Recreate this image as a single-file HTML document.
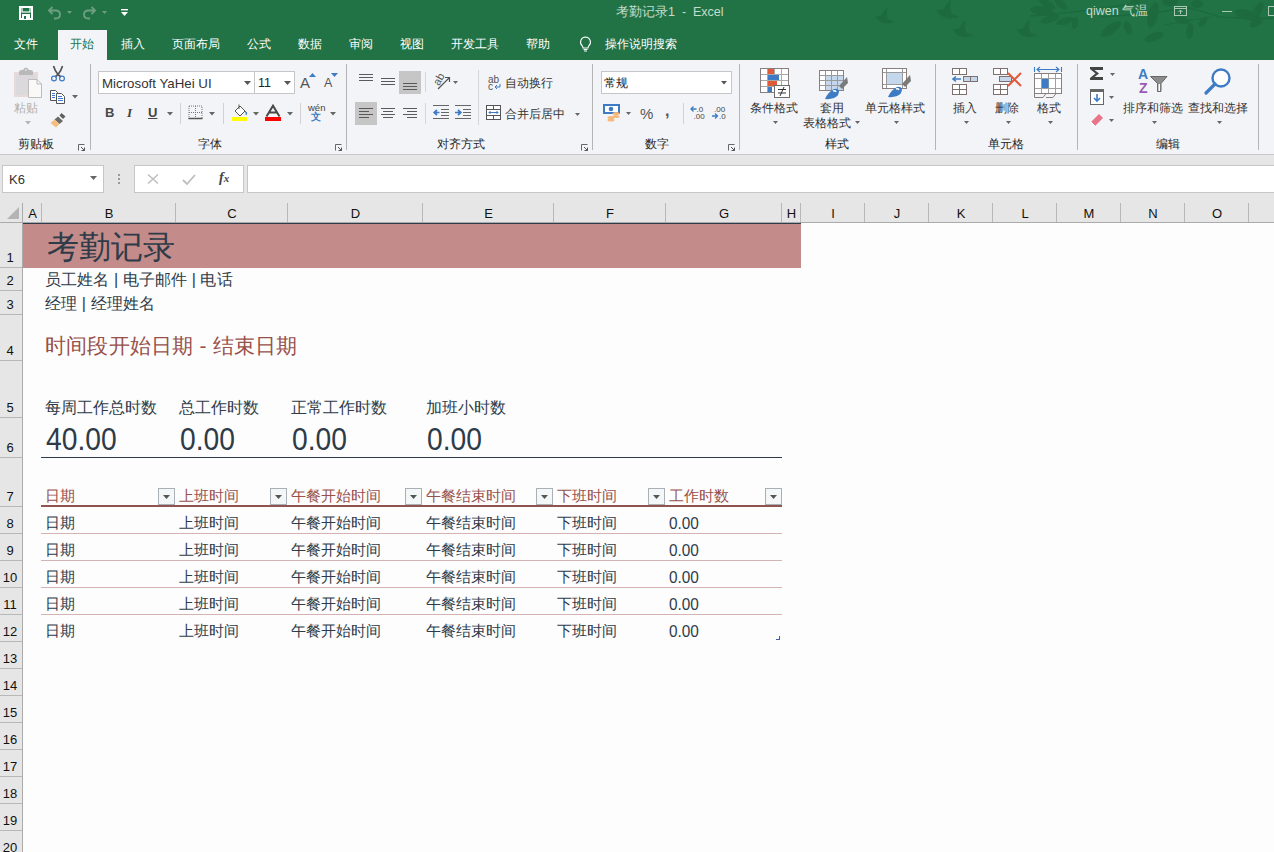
<!DOCTYPE html><html><head><meta charset="utf-8"><style>
*{box-sizing:border-box;margin:0;padding:0}
html,body{width:1274px;height:852px;overflow:hidden;background:#fdfdfd;font-family:"Liberation Sans",sans-serif}
.a{position:absolute}
.t{position:absolute;white-space:nowrap;line-height:1}
svg{position:absolute;overflow:visible}
</style></head><body>
<div class="a" style="left:0px;top:0px;width:1274px;height:60px;background:#217346"></div>
<div class="a" style="left:0px;top:60px;width:1274px;height:95px;background:#f3f4f7"></div>
<div class="a" style="left:0px;top:154px;width:1274px;height:1px;background:#c9c9c9"></div>
<div class="a" style="left:58px;top:30px;width:49px;height:31px;background:#f3f4f7"></div>
<div class="a" style="left:90px;top:64px;width:1px;height:86px;background:#b4b4b4"></div>
<div class="a" style="left:346px;top:64px;width:1px;height:86px;background:#b4b4b4"></div>
<div class="a" style="left:592px;top:64px;width:1px;height:86px;background:#b4b4b4"></div>
<div class="a" style="left:739px;top:64px;width:1px;height:86px;background:#b4b4b4"></div>
<div class="a" style="left:935px;top:64px;width:1px;height:86px;background:#b4b4b4"></div>
<div class="a" style="left:1077px;top:64px;width:1px;height:86px;background:#b4b4b4"></div>
<div class="a" style="left:1258px;top:64px;width:1px;height:86px;background:#b4b4b4"></div>
<div class="t" style="left:18px;top:138px;font-size:12px;color:#262626;">剪贴板</div>
<div class="t" style="left:198px;top:138px;font-size:12px;color:#262626;">字体</div>
<div class="t" style="left:437px;top:138px;font-size:12px;color:#262626;">对齐方式</div>
<div class="t" style="left:645px;top:138px;font-size:12px;color:#262626;">数字</div>
<div class="t" style="left:825px;top:138px;font-size:12px;color:#262626;">样式</div>
<div class="t" style="left:988px;top:138px;font-size:12px;color:#262626;">单元格</div>
<div class="t" style="left:1156px;top:138px;font-size:12px;color:#262626;">编辑</div>
<svg style="left:78px;top:144px" width="7" height="7" viewBox="0 0 7 7"><path d="M0.5 6.5V0.5H6.5" fill="none" stroke="#666"/><path d="M3 3L6.5 6.5M6.5 3.5V6.5H3.5" fill="none" stroke="#555"/></svg>
<svg style="left:335px;top:144px" width="7" height="7" viewBox="0 0 7 7"><path d="M0.5 6.5V0.5H6.5" fill="none" stroke="#666"/><path d="M3 3L6.5 6.5M6.5 3.5V6.5H3.5" fill="none" stroke="#555"/></svg>
<svg style="left:581px;top:144px" width="7" height="7" viewBox="0 0 7 7"><path d="M0.5 6.5V0.5H6.5" fill="none" stroke="#666"/><path d="M3 3L6.5 6.5M6.5 3.5V6.5H3.5" fill="none" stroke="#555"/></svg>
<svg style="left:728px;top:144px" width="7" height="7" viewBox="0 0 7 7"><path d="M0.5 6.5V0.5H6.5" fill="none" stroke="#666"/><path d="M3 3L6.5 6.5M6.5 3.5V6.5H3.5" fill="none" stroke="#555"/></svg>
<svg style="left:13px;top:67px" width="30" height="32" viewBox="0 0 30 32"><rect x="1" y="5" width="24" height="25" fill="#e6dada"/><rect x="3" y="8" width="20" height="20" fill="#dcd9dc"/><path d="M6 8V5Q6 3 8.5 3H10Q11 0.5 13 0.5Q15 0.5 16 3H17.5Q20 3 20 5V8Z" fill="#b9b9b9"/><circle cx="13" cy="3" r="1" fill="#e6dada"/><path d="M15.5 12.5H24L28.5 17V30.5H15.5Z" fill="#fbf8f8" stroke="#bdbdbd"/><path d="M24 12.5V17H28.5" fill="none" stroke="#bdbdbd"/></svg>
<div class="t" style="left:14px;top:102px;font-size:12px;color:#b0b0b0;">粘贴</div>
<svg style="left:25px;top:121px" width="6" height="4"><path d="M0 0H6L3.0 3.5Z" fill="#b5b5b5"/></svg>
<svg style="left:50px;top:65px" width="16" height="17" viewBox="0 0 16 17"><path d="M3.5 1Q5 6 8 9.5M12.5 1Q11 6 8 9.5M8 9.5L5 12M8 9.5L11 12" stroke="#555" stroke-width="1.7" fill="none"/><circle cx="4" cy="13.5" r="2.4" fill="none" stroke="#3d7bc4" stroke-width="1.2"/><circle cx="12" cy="13.5" r="2.4" fill="none" stroke="#3d7bc4" stroke-width="1.2"/></svg>
<svg style="left:49px;top:89px" width="17" height="16" viewBox="0 0 17 16"><path d="M1.5 1.5H6.5L8.5 3.5V11.5H1.5Z" fill="#fff" stroke="#555"/><path d="M3 4.5H6M3 6.5H6M3 8.5H6" stroke="#3d7bc4"/><path d="M7.5 4.5H12.5L15.5 7.5V14.5H7.5Z" fill="#fff" stroke="#555"/><path d="M9 7.5H13M9 9.5H14M9 11.5H14" stroke="#3d7bc4"/></svg>
<svg style="left:72px;top:95px" width="6" height="4"><path d="M0 0H6L3.0 3.5Z" fill="#666"/></svg>
<svg style="left:50px;top:112px" width="17" height="16" viewBox="0 0 17 16"><path d="M11.5 1L15.5 4.5L13 7L9.5 3.5Z" fill="#5f5f5f"/><path d="M8 4.5L13 9L9.5 12L4.5 7.5Z" fill="#6a6a6a"/><path d="M4.5 7.5L9.5 12L6 15.5L0.5 11Z" fill="#f3bf7f"/></svg>
<div class="a" style="left:98px;top:71px;width:157px;height:23px;background:#fff;border:1px solid #c6c6c6"></div>
<div class="t" style="left:102px;top:77px;font-size:13.3px;color:#333;">Microsoft YaHei UI</div>
<svg style="left:244px;top:81px" width="7" height="4"><path d="M0 0H7L3.5 4.0Z" fill="#555"/></svg>
<div class="a" style="left:254px;top:71px;width:41px;height:23px;background:#fff;border:1px solid #c6c6c6"></div>
<div class="t" style="left:258px;top:77px;font-size:12.5px;color:#222;">11</div>
<svg style="left:284px;top:81px" width="7" height="4"><path d="M0 0H7L3.5 4.0Z" fill="#555"/></svg>
<div class="t" style="left:300px;top:75px;font-size:15px;color:#555;">A</div>
<svg style="left:309px;top:73px" width="7" height="4" viewBox="0 0 7 4"><path d="M0 4H7L3.5 0Z" fill="#3d7bc4"/></svg>
<div class="t" style="left:324px;top:77px;font-size:12.5px;color:#555;">A</div>
<svg style="left:331px;top:73px" width="7" height="4" viewBox="0 0 7 4"><path d="M0 0H7L3.5 4Z" fill="#3d7bc4"/></svg>
<div class="t" style="left:105px;top:106px;font-size:13px;color:#4a4a4a;font-weight:bold">B</div>
<div class="t" style="left:127px;top:106px;font-size:13px;color:#444;font-style:italic;font-family:Liberation Serif;font-weight:bold">I</div>
<div class="t" style="left:148px;top:106px;font-size:13px;color:#444;text-decoration:underline;font-weight:bold">U</div>
<svg style="left:167px;top:112px" width="6" height="4"><path d="M0 0H6L3.0 3.5Z" fill="#666"/></svg>
<div class="a" style="left:180px;top:103px;width:1px;height:21px;background:#d6cfcf"></div>
<svg style="left:188px;top:105px" width="15" height="15" viewBox="0 0 15 15"><path d="M1 1H14V14M1 1V14M7.5 1V14M1 7.5H14" fill="none" stroke="#777" stroke-dasharray="1 1"/><path d="M0.5 13.5H14.5" stroke="#555" stroke-width="1.5"/></svg>
<svg style="left:209px;top:112px" width="6" height="4"><path d="M0 0H6L3.0 3.5Z" fill="#666"/></svg>
<div class="a" style="left:223px;top:103px;width:1px;height:21px;background:#d6cfcf"></div>
<svg style="left:232px;top:103px" width="17" height="19" viewBox="0 0 17 19"><path d="M3 8L8 3L13 8L8 13Z" fill="#fff" stroke="#555"/><path d="M7 6V1.5" stroke="#555"/><path d="M13 8Q16 10 14 12" fill="#3d7bc4" stroke="#3d7bc4"/><rect x="0" y="14" width="15" height="4" fill="#ffff00"/></svg>
<svg style="left:253px;top:112px" width="6" height="4"><path d="M0 0H6L3.0 3.5Z" fill="#666"/></svg>
<svg style="left:265px;top:105px" width="16" height="12" viewBox="0 0 16 12"><path d="M1.5 11.5L8 0.8L14.5 11.5M4.5 7.5H11.5" fill="none" stroke="#484848" stroke-width="2"/></svg>
<div class="a" style="left:265px;top:117px;width:16px;height:4px;background:#ff0000"></div>
<svg style="left:287px;top:112px" width="6" height="4"><path d="M0 0H6L3.0 3.5Z" fill="#666"/></svg>
<div class="a" style="left:300px;top:103px;width:1px;height:21px;background:#d6cfcf"></div>
<div class="t" style="left:308px;top:103px;font-size:9.5px;color:#444;">wén</div>
<div class="t" style="left:311px;top:112px;font-size:10px;color:#3d7bc4;font-weight:bold">文</div>
<svg style="left:330px;top:112px" width="6" height="4"><path d="M0 0H6L3.0 3.5Z" fill="#666"/></svg>
<svg style="left:359px;top:74px" width="20" height="20" viewBox="0 0 20 20"><rect x="0" y="0" width="14" height="1" fill="#5a5a5a"/><rect x="0" y="3" width="14" height="1" fill="#5a5a5a"/><rect x="0" y="6" width="14" height="1" fill="#5a5a5a"/></svg>
<svg style="left:381px;top:78px" width="20" height="20" viewBox="0 0 20 20"><rect x="0" y="0" width="14" height="1" fill="#5a5a5a"/><rect x="0" y="3" width="14" height="1" fill="#5a5a5a"/><rect x="0" y="6" width="14" height="1" fill="#5a5a5a"/></svg>
<div class="a" style="left:399px;top:71px;width:22px;height:23px;background:#c6c6c6"></div>
<svg style="left:403px;top:83px" width="20" height="20" viewBox="0 0 20 20"><rect x="0" y="0" width="14" height="1" fill="#5a5a5a"/><rect x="0" y="3" width="14" height="1" fill="#5a5a5a"/><rect x="0" y="6" width="14" height="1" fill="#5a5a5a"/></svg>
<div class="a" style="left:425px;top:72px;width:1px;height:20px;background:#d6d6d6"></div>
<svg style="left:432px;top:72px" width="20" height="18" viewBox="0 0 20 18"><text x="1" y="12" font-size="11" fill="#555" transform="rotate(-60 6 8)" font-family="Liberation Sans">ab</text><path d="M6 17L17 6M13 5.5H17.5V10" fill="none" stroke="#555" stroke-width="1.2"/></svg>
<svg style="left:453px;top:81px" width="5" height="4"><path d="M0 0H5L2.5 3.0Z" fill="#666"/></svg>
<div class="a" style="left:355px;top:102px;width:22px;height:23px;background:#c6c6c6"></div>
<svg style="left:359px;top:108px" width="20" height="20" viewBox="0 0 20 20"><rect x="0" y="0" width="14" height="1" fill="#5a5a5a"/><rect x="0" y="3" width="10" height="1" fill="#5a5a5a"/><rect x="0" y="6" width="14" height="1" fill="#5a5a5a"/><rect x="0" y="9" width="10" height="1" fill="#5a5a5a"/></svg>
<svg style="left:381px;top:108px" width="20" height="20" viewBox="0 0 20 20"><rect x="0" y="0" width="14" height="1" fill="#5a5a5a"/><rect x="2" y="3" width="10" height="1" fill="#5a5a5a"/><rect x="0" y="6" width="14" height="1" fill="#5a5a5a"/><rect x="2" y="9" width="10" height="1" fill="#5a5a5a"/></svg>
<svg style="left:403px;top:108px" width="20" height="20" viewBox="0 0 20 20"><rect x="0" y="0" width="14" height="1" fill="#5a5a5a"/><rect x="4" y="3" width="10" height="1" fill="#5a5a5a"/><rect x="0" y="6" width="14" height="1" fill="#5a5a5a"/><rect x="4" y="9" width="10" height="1" fill="#5a5a5a"/></svg>
<div class="a" style="left:425px;top:103px;width:1px;height:21px;background:#d6d6d6"></div>
<svg style="left:433px;top:105px" width="17" height="15" viewBox="0 0 17 15"><path d="M0 0.5H16M8 4.5H16M8 7.5H16M8 10.5H16M0 13.5H16" stroke="#666"/><path d="M1 7.5H6.5M4 5L1.2 7.5L4 10" fill="none" stroke="#3d7bc4" stroke-width="1.7"/></svg>
<svg style="left:455px;top:105px" width="17" height="15" viewBox="0 0 17 15"><path d="M0 0.5H16M8 4.5H16M8 7.5H16M8 10.5H16M0 13.5H16" stroke="#666"/><path d="M0 7.5H5.5M3 5L5.8 7.5L3 10" fill="none" stroke="#3d7bc4" stroke-width="1.7"/></svg>
<div class="a" style="left:478px;top:70px;width:1px;height:55px;background:#d6d6d6"></div>
<div class="t" style="left:488px;top:75px;font-size:10px;color:#555;">ab</div>
<div class="t" style="left:488px;top:82px;font-size:10px;color:#555;">c</div>
<svg style="left:494px;top:84px" width="7" height="5" viewBox="0 0 7 5"><path d="M6 0V3H1M3 1L1 3L3 5" fill="none" stroke="#3d7bc4"/></svg>
<div class="t" style="left:505px;top:77px;font-size:12px;color:#333;">自动换行</div>
<svg style="left:486px;top:105px" width="16" height="16" viewBox="0 0 16 16"><rect x="0.5" y="0.5" width="14" height="14" fill="#fff" stroke="#555"/><path d="M0.5 4.5H14.5M0.5 10.5H14.5M7.5 0.5V4.5M7.5 10.5V14.5" stroke="#555"/><path d="M3 7.5H12M4.5 6L3 7.5L4.5 9M10.5 6L12 7.5L10.5 9" fill="none" stroke="#3d7bc4"/></svg>
<div class="t" style="left:505px;top:108px;font-size:12px;color:#333;">合并后居中</div>
<svg style="left:575px;top:113px" width="5" height="4"><path d="M0 0H5L2.5 3.0Z" fill="#666"/></svg>
<div class="a" style="left:601px;top:71px;width:131px;height:23px;background:#fff;border:1px solid #c6c6c6"></div>
<div class="t" style="left:604px;top:77px;font-size:12px;color:#222;">常规</div>
<svg style="left:721px;top:81px" width="6" height="4"><path d="M0 0H6L3.0 3.5Z" fill="#555"/></svg>
<svg style="left:603px;top:104px" width="19" height="18" viewBox="0 0 19 18"><rect x="1" y="1" width="15" height="8" fill="#fff" stroke="#3d7bc4" stroke-width="2"/><circle cx="8" cy="5" r="2.3" fill="#3d7bc4"/><ellipse cx="13" cy="9.5" rx="3.5" ry="1.6" fill="#f5b97a"/><ellipse cx="13" cy="12.5" rx="3.5" ry="1.6" fill="#f5b97a"/><ellipse cx="8" cy="13.5" rx="3.5" ry="1.6" fill="#f5b97a"/><ellipse cx="8" cy="16" rx="3.5" ry="1.6" fill="#f5b97a"/></svg>
<svg style="left:626px;top:112px" width="5" height="4"><path d="M0 0H5L2.5 3.0Z" fill="#666"/></svg>
<div class="t" style="left:640px;top:106px;font-size:15px;color:#555;">%</div>
<div class="t" style="left:665px;top:103px;font-size:16px;color:#555;font-weight:bold">,</div>
<div class="a" style="left:683px;top:103px;width:1px;height:21px;background:#d6cfcf"></div>
<svg style="left:690px;top:105px" width="17" height="15" viewBox="0 0 17 15"><path d="M1 4H6.5M3.5 1.5L1 4L3.5 6.5" fill="none" stroke="#3d7bc4" stroke-width="1.3"/><text x="6.5" y="6.5" font-size="8" fill="#444" font-family="Liberation Sans">.0</text><text x="3.5" y="14" font-size="8" fill="#444" font-family="Liberation Sans">.00</text></svg>
<svg style="left:712px;top:105px" width="17" height="15" viewBox="0 0 17 15"><text x="2" y="6.5" font-size="8" fill="#444" font-family="Liberation Sans">.00</text><path d="M0 11H5.5M3 8.5L5.5 11L3 13.5" fill="none" stroke="#3d7bc4" stroke-width="1.3"/><text x="7" y="14" font-size="8" fill="#444" font-family="Liberation Sans">.0</text></svg>
<svg style="left:760px;top:68px" width="31" height="31" viewBox="0 0 31 31"><rect x="0.5" y="0.5" width="28" height="24" fill="#fff"/><path d="M7.5 0.5V24.5M14.5 0.5V24.5M21.5 0.5V24.5M0.5 6.5H28.5M0.5 12.5H28.5M0.5 18.5H28.5" stroke="#a8a8a8"/><rect x="8" y="1" width="6" height="5" fill="#e05a3a"/><rect x="8" y="7" width="11" height="5" fill="#3d7bc4"/><rect x="8" y="13" width="9" height="5" fill="#e05a3a"/><rect x="8" y="19" width="4" height="5" fill="#3d7bc4"/><rect x="0.5" y="0.5" width="28" height="24" fill="none" stroke="#8a7f7f"/><rect x="14.5" y="17.5" width="15" height="12" fill="#fff" stroke="#6f6f6f"/><path d="M18 21.5H26M18 25H26M24 19L20 28" stroke="#333" stroke-width="1" fill="none"/></svg>
<div class="t" style="left:750px;top:102px;font-size:12px;color:#333;">条件格式</div>
<svg style="left:773px;top:121px" width="5" height="4"><path d="M0 0H5L2.5 3.0Z" fill="#666"/></svg>
<svg style="left:819px;top:70px" width="31" height="30" viewBox="0 0 31 30"><rect x="0.5" y="0.5" width="24" height="20" fill="#fff"/><rect x="6" y="5" width="19" height="16" fill="#c5d7ec"/><path d="M6.5 0.5V20.5M12.5 0.5V20.5M18.5 0.5V20.5M0.5 5.5H24.5M0.5 10.5H24.5M0.5 15.5H24.5" stroke="#9a9a9a"/><rect x="0.5" y="0.5" width="24" height="20" fill="none" stroke="#8a7f7f"/><path d="M20 16L28 7L29 13L23 19Z" fill="#7a7a7a"/><path d="M6 29Q9 22 15 19Q19 18 20 21Q20 26 15 28Q11 29.5 6 29Z" fill="#3d7bc4"/><path d="M14 21Q16 20 17 22" stroke="#fff" stroke-width="1.5" fill="none"/></svg>
<div class="t" style="left:820px;top:102px;font-size:12px;color:#333;">套用</div>
<div class="t" style="left:803px;top:117px;font-size:12px;color:#333;">表格格式</div>
<svg style="left:855px;top:121px" width="5" height="4"><path d="M0 0H5L2.5 3.0Z" fill="#666"/></svg>
<svg style="left:882px;top:68px" width="31" height="30" viewBox="0 0 31 30"><rect x="0.5" y="0.5" width="24" height="20" fill="#fff"/><rect x="5" y="5" width="15" height="11" fill="#c5d7ec"/><path d="M4.5 0.5V20.5M0.5 4.5H24.5M0.5 16.5H24.5M20.5 0.5V20.5" stroke="#9a9a9a"/><rect x="0.5" y="0.5" width="24" height="20" fill="none" stroke="#8a7f7f"/><path d="M20 16L28 7L29 13L23 19Z" fill="#7a7a7a"/><path d="M6 29Q9 22 15 19Q19 18 20 21Q20 26 15 28Q11 29.5 6 29Z" fill="#3d7bc4"/><path d="M14 21Q16 20 17 22" stroke="#fff" stroke-width="1.5" fill="none"/></svg>
<div class="t" style="left:865px;top:102px;font-size:12px;color:#333;">单元格样式</div>
<svg style="left:894px;top:121px" width="5" height="4"><path d="M0 0H5L2.5 3.0Z" fill="#666"/></svg>
<svg style="left:952px;top:68px" width="27" height="28" viewBox="0 0 27 28"><g fill="#fff" stroke="#7f6f6f"><rect x="0.5" y="0.5" width="14" height="6"/><rect x="0.5" y="16.5" width="14" height="10"/></g><path d="M7.5 0.5V6.5M7.5 16.5V26.5M0.5 21.5H14.5" stroke="#7f6f6f"/><rect x="11.5" y="8.5" width="14" height="5" fill="#c5d7ec" stroke="#7f6f6f"/><path d="M18.5 8.5V13.5" stroke="#7f6f6f"/><path d="M1 11H9M4 8.5L1 11L4 13.5" fill="none" stroke="#3d7bc4" stroke-width="1.6"/></svg>
<div class="t" style="left:953px;top:102px;font-size:12px;color:#333;">插入</div>
<svg style="left:964px;top:121px" width="5" height="4"><path d="M0 0H5L2.5 3.0Z" fill="#666"/></svg>
<svg style="left:993px;top:68px" width="30" height="28" viewBox="0 0 30 28"><g fill="#fff" stroke="#7f6f6f"><rect x="0.5" y="0.5" width="14" height="6"/><rect x="0.5" y="16.5" width="14" height="10"/></g><path d="M7.5 0.5V6.5M7.5 16.5V26.5M0.5 21.5H14.5" stroke="#7f6f6f"/><rect x="6.5" y="8.5" width="12" height="5" fill="#c5d7ec" stroke="#7f6f6f"/><path d="M15 5L28 18M28 5L15 18" stroke="#e05a3a" stroke-width="2"/></svg>
<div class="t" style="left:995px;top:102px;font-size:12px;color:#333;">删除</div>
<svg style="left:1006px;top:121px" width="5" height="4"><path d="M0 0H5L2.5 3.0Z" fill="#666"/></svg>
<svg style="left:1034px;top:66px" width="29" height="32" viewBox="0 0 29 32"><path d="M0.5 1V6M27.5 1V6M3 3.5H25M6 1L3 3.5L6 6M22 1L25 3.5L22 6" fill="none" stroke="#3d7bc4" stroke-width="1.1"/><rect x="0.5" y="7.5" width="27" height="20" fill="#fff"/><path d="M7.5 7.5V27.5M14.5 7.5V27.5M21.5 7.5V27.5M0.5 12.5H27.5M0.5 22.5H27.5" stroke="#a0a0a0"/><rect x="8" y="13" width="6.5" height="9" fill="#3d7bc4"/><rect x="0.5" y="7.5" width="27" height="20" fill="none" stroke="#8a7f7f"/><path d="M0.5 27.5V31.5H9L12 27.5M12 31.5H19L22 27.5" fill="none" stroke="#8a7f7f"/></svg>
<div class="t" style="left:1037px;top:102px;font-size:12px;color:#333;">格式</div>
<svg style="left:1048px;top:121px" width="5" height="4"><path d="M0 0H5L2.5 3.0Z" fill="#666"/></svg>
<svg style="left:1089px;top:66px" width="15" height="15" viewBox="0 0 15 15"><path d="M1 1H14V4H5.5L10 7.5L5.5 11H14V14H1V12L6.5 7.5L1 3Z" fill="#444"/></svg>
<svg style="left:1110px;top:73px" width="5" height="4"><path d="M0 0H5L2.5 3.0Z" fill="#666"/></svg>
<svg style="left:1090px;top:89px" width="14" height="16" viewBox="0 0 14 16"><rect x="0.5" y="0.5" width="13" height="15" fill="#fff" stroke="#666"/><rect x="0" y="0" width="14" height="3" fill="#666"/><path d="M7 5V12M4 9L7 12L10 9" fill="none" stroke="#3d7bc4" stroke-width="1.6"/></svg>
<svg style="left:1109px;top:96px" width="5" height="4"><path d="M0 0H5L2.5 3.0Z" fill="#666"/></svg>
<svg style="left:1090px;top:112px" width="14" height="14" viewBox="0 0 14 14"><path d="M1 10L9 2L13 6L5 14Z" fill="#e8758a"/><path d="M1 10L5 14" stroke="#fff"/></svg>
<svg style="left:1109px;top:119px" width="5" height="4"><path d="M0 0H5L2.5 3.0Z" fill="#666"/></svg>
<div class="t" style="left:1138px;top:67px;font-size:14px;color:#3d7bc4;font-weight:bold">A</div>
<div class="t" style="left:1139px;top:81px;font-size:14px;color:#9b59b6;font-weight:bold">Z</div>
<svg style="left:1150px;top:76px" width="18" height="17" viewBox="0 0 18 17"><path d="M0.5 0.5H17L11 7.5V15.5H7.5V7.5Z" fill="#8c8c8c" stroke="#6a6a6a"/><path d="M8.5 8V15H10V8Z" fill="#fff"/></svg>
<div class="t" style="left:1123px;top:102px;font-size:12px;color:#333;">排序和筛选</div>
<svg style="left:1152px;top:121px" width="5" height="4"><path d="M0 0H5L2.5 3.0Z" fill="#666"/></svg>
<svg style="left:1203px;top:68px" width="29" height="28" viewBox="0 0 29 28"><circle cx="18" cy="10" r="8.5" fill="#fff" stroke="#3d7bc4" stroke-width="2.4"/><path d="M12 16L3 25" stroke="#3d7bc4" stroke-width="3.2" stroke-linecap="round"/></svg>
<div class="t" style="left:1188px;top:102px;font-size:12px;color:#333;">查找和选择</div>
<svg style="left:1217px;top:121px" width="5" height="4"><path d="M0 0H5L2.5 3.0Z" fill="#666"/></svg>
<svg style="left:0;top:0" width="1274" height="60" viewBox="0 0 1274 60"><g transform="translate(884,18) scale(0.9,0.9)" fill="#1c6a3e"><ellipse cx="0" cy="2" rx="7" ry="3.5" transform="rotate(25)"/><path d="M-3 0Q-2 -8 4 -11Q2 -4 4 1Z"/><path d="M4 2Q9 2 11 5L5 6Z"/><path d="M-6 -1L-10 -2L-6 3Z"/></g><g transform="translate(947,12) scale(1.1,1.1)" fill="#1c6a3e"><ellipse cx="0" cy="2" rx="7" ry="3.5" transform="rotate(25)"/><path d="M-3 0Q-2 -8 4 -11Q2 -4 4 1Z"/><path d="M4 2Q9 2 11 5L5 6Z"/><path d="M-6 -1L-10 -2L-6 3Z"/></g><g transform="translate(962,31) scale(1.0,1.0)" fill="#1c6a3e"><ellipse cx="0" cy="2" rx="7" ry="3.5" transform="rotate(25)"/><path d="M-3 0Q-2 -8 4 -11Q2 -4 4 1Z"/><path d="M4 2Q9 2 11 5L5 6Z"/><path d="M-6 -1L-10 -2L-6 3Z"/></g><g transform="translate(1026,31) scale(1.0,1.0)" fill="#1c6a3e"><ellipse cx="0" cy="2" rx="7" ry="3.5" transform="rotate(25)"/><path d="M-3 0Q-2 -8 4 -11Q2 -4 4 1Z"/><path d="M4 2Q9 2 11 5L5 6Z"/><path d="M-6 -1L-10 -2L-6 3Z"/></g><path d="M1030 16Q1060 14 1090 10Q1110 7 1130 4" fill="none" stroke="#1c6a3e" stroke-width="1.3"/><path d="M1100 17Q1130 15 1160 12Q1175 9 1190 8Q1205 12 1220 17Q1250 19 1274 18" fill="none" stroke="#1c6a3e" stroke-width="1.6"/><path d="M1164 25Q1190 20 1212 17" fill="none" stroke="#1c6a3e" stroke-width="1.2"/><ellipse cx="1042" cy="11" rx="12" ry="4.5" transform="rotate(10 1042 11)" fill="#1c6a3e"/><ellipse cx="1047" cy="4" rx="9" ry="3.5" transform="rotate(30 1047 4)" fill="#1c6a3e"/><ellipse cx="1050" cy="19" rx="10" ry="3.5" transform="rotate(-20 1050 19)" fill="#1c6a3e"/><ellipse cx="1065" cy="21" rx="9" ry="3.5" transform="rotate(-15 1065 21)" fill="#1c6a3e"/><ellipse cx="1061" cy="4" rx="8" ry="3.5" transform="rotate(40 1061 4)" fill="#1c6a3e"/><ellipse cx="1075" cy="23" rx="3" ry="6" transform="rotate(10 1075 23)" fill="#1c6a3e"/><ellipse cx="1111" cy="29" rx="12" ry="4.5" transform="rotate(-35 1111 29)" fill="#1c6a3e"/><ellipse cx="1128" cy="28" rx="3.5" ry="7" transform="rotate(-20 1128 28)" fill="#1c6a3e"/><ellipse cx="1135" cy="2" rx="5" ry="3" transform="rotate(0 1135 2)" fill="#1c6a3e"/><ellipse cx="1153" cy="15" rx="5" ry="13" transform="rotate(15 1153 15)" fill="#1c6a3e"/><ellipse cx="1170" cy="2" rx="8" ry="4" transform="rotate(0 1170 2)" fill="#1c6a3e"/><ellipse cx="1197" cy="4" rx="6" ry="4" transform="rotate(0 1197 4)" fill="#1c6a3e"/><ellipse cx="1182" cy="20" rx="8" ry="3.5" transform="rotate(15 1182 20)" fill="#1c6a3e"/><ellipse cx="1190" cy="31" rx="3.5" ry="8" transform="rotate(5 1190 31)" fill="#1c6a3e"/><ellipse cx="1203" cy="22" rx="3" ry="6" transform="rotate(40 1203 22)" fill="#1c6a3e"/><ellipse cx="1154" cy="37" rx="10" ry="4" transform="rotate(-20 1154 37)" fill="#1c6a3e"/><ellipse cx="1247" cy="15" rx="13" ry="5" transform="rotate(15 1247 15)" fill="#1c6a3e"/><ellipse cx="1258" cy="10" rx="4" ry="9" transform="rotate(30 1258 10)" fill="#1c6a3e"/><ellipse cx="1256" cy="23" rx="7" ry="3.5" transform="rotate(-30 1256 23)" fill="#1c6a3e"/></svg>
<svg style="left:19px;top:6px" width="14" height="14" viewBox="0 0 14 14"><path d="M1 1H13V13H1Z" fill="none" stroke="#fff" stroke-width="2"/><rect x="3" y="1" width="8" height="5" fill="none" stroke="#fff" stroke-width="1.2"/><rect x="3" y="8" width="8" height="5" fill="#fff"/><rect x="5" y="10" width="2" height="3" fill="#217346"/></svg>
<svg style="left:47px;top:5px" width="26" height="15" viewBox="0 0 26 15"><path d="M2 5.5H8.5Q13 5.5 13 9.5Q13 13.5 8.5 13.5H7" fill="none" stroke="#6f9f80" stroke-width="1.8"/><path d="M5.5 2L2 5.5L5.5 9" fill="none" stroke="#6f9f80" stroke-width="1.8"/><path d="M20 6H25L22.5 9Z" fill="#6f9f80"/></svg>
<svg style="left:82px;top:5px" width="26" height="15" viewBox="0 0 26 15"><path d="M13 5.5H6.5Q2 5.5 2 9.5Q2 13.5 6.5 13.5H8" fill="none" stroke="#6f9f80" stroke-width="1.8"/><path d="M9.5 2L13 5.5L9.5 9" fill="none" stroke="#6f9f80" stroke-width="1.8"/><path d="M20 6H25L22.5 9Z" fill="#6f9f80"/></svg>
<svg style="left:121px;top:9px" width="7" height="8" viewBox="0 0 7 8"><path d="M0 0H7V1.4H0Z" fill="#fff"/><path d="M0 3H7L3.5 7Z" fill="#fff"/></svg>
<div class="t" style="left:616px;top:6px;font-size:12.5px;color:#c4dccb;">考勤记录1&nbsp; -&nbsp; Excel</div>
<div class="t" style="left:1086px;top:5px;font-size:12.5px;color:#c4dccb;">qiwen 气温</div>
<svg style="left:1174px;top:6px" width="13" height="10" viewBox="0 0 13 10"><rect x="0.5" y="0.5" width="12" height="9" fill="none" stroke="#a9c9b4"/><path d="M0.5 2.5H12.5M6.5 8V4M4.5 6L6.5 4L8.5 6" fill="none" stroke="#a9c9b4"/></svg>
<div class="a" style="left:1222px;top:11px;width:10px;height:1px;background:#a9c9b4"></div>
<div class="a" style="left:1268px;top:6px;width:10px;height:10px;border:1px solid #a9c9b4"></div>
<div class="t" style="left:14px;top:38px;font-size:12px;color:#fff;">文件</div>
<div class="t" style="left:70px;top:38px;font-size:12px;color:#217346;">开始</div>
<div class="t" style="left:121px;top:38px;font-size:12px;color:#fff;">插入</div>
<div class="t" style="left:172px;top:38px;font-size:12px;color:#fff;">页面布局</div>
<div class="t" style="left:247px;top:38px;font-size:12px;color:#fff;">公式</div>
<div class="t" style="left:298px;top:38px;font-size:12px;color:#fff;">数据</div>
<div class="t" style="left:349px;top:38px;font-size:12px;color:#fff;">审阅</div>
<div class="t" style="left:400px;top:38px;font-size:12px;color:#fff;">视图</div>
<div class="t" style="left:451px;top:38px;font-size:12px;color:#fff;">开发工具</div>
<div class="t" style="left:526px;top:38px;font-size:12px;color:#fff;">帮助</div>
<div class="t" style="left:605px;top:38px;font-size:12px;color:#fff;">操作说明搜索</div>
<svg style="left:579px;top:36px" width="13" height="16" viewBox="0 0 13 16"><path d="M6.5 1A5 5 0 0 0 3 9.5Q4 11 4 12H9Q9 11 10 9.5A5 5 0 0 0 6.5 1Z" fill="none" stroke="#fff" stroke-width="1.1"/><path d="M4.5 13.5H8.5M5 15H8" stroke="#fff"/></svg>
<div class="a" style="left:0px;top:155px;width:1274px;height:48px;background:#e6e6e6"></div>
<div class="a" style="left:2px;top:165px;width:102px;height:28px;background:#fff;border:1px solid #c6c6c6"></div>
<div class="a" style="left:134px;top:165px;width:110px;height:28px;background:#fff;border:1px solid #c6c6c6"></div>
<div class="a" style="left:247px;top:165px;width:1027px;height:28px;background:#fff;border:1px solid #c6c6c6;border-right:none"></div>
<div class="t" style="left:9px;top:173px;font-size:13px;color:#333;">K6</div>
<svg style="left:90px;top:176px" width="7" height="4"><path d="M0 0H7L3.5 4.0Z" fill="#666"/></svg>
<div class="a" style="left:118px;top:174px;width:2px;height:2px;background:#9a9a9a"></div>
<div class="a" style="left:118px;top:178px;width:2px;height:2px;background:#9a9a9a"></div>
<div class="a" style="left:118px;top:182px;width:2px;height:2px;background:#9a9a9a"></div>
<svg style="left:147px;top:174px" width="12" height="10" viewBox="0 0 12 10"><path d="M1 0.5L11 9.5M11 0.5L1 9.5" stroke="#bdbdbd" stroke-width="1.4"/></svg>
<svg style="left:182px;top:174px" width="14" height="11" viewBox="0 0 14 11"><path d="M1 6L5 10L13 1" fill="none" stroke="#bdbdbd" stroke-width="1.8"/></svg>
<div class="t" style="left:219px;top:171px;font-size:14px;color:#444;font-family:Liberation Serif;font-style:italic;font-weight:bold">f<span style="font-size:11px">x</span></div>
<div class="a" style="left:0px;top:203px;width:1274px;height:20px;background:#e6e6e6"></div>
<div class="a" style="left:0px;top:222px;width:1274px;height:1px;background:#ababab"></div>
<div class="a" style="left:0px;top:223px;width:22px;height:629px;background:#e6e6e6"></div>
<svg style="left:7px;top:207px" width="12" height="12" viewBox="0 0 12 12"><path d="M12 0V12H0Z" fill="#b4b4b4"/></svg>
<div class="a" style="left:22px;top:203px;width:1px;height:649px;background:#ababab"></div>
<div class="a" style="left:41px;top:203px;width:1px;height:19px;background:#b8b8b8"></div>
<div class="t" style="left:23px;top:207px;width:19px;text-align:center;font-size:13px;color:#111">A</div>
<div class="a" style="left:175px;top:203px;width:1px;height:19px;background:#b8b8b8"></div>
<div class="t" style="left:42px;top:207px;width:134px;text-align:center;font-size:13px;color:#111">B</div>
<div class="a" style="left:287px;top:203px;width:1px;height:19px;background:#b8b8b8"></div>
<div class="t" style="left:176px;top:207px;width:112px;text-align:center;font-size:13px;color:#111">C</div>
<div class="a" style="left:422px;top:203px;width:1px;height:19px;background:#b8b8b8"></div>
<div class="t" style="left:288px;top:207px;width:135px;text-align:center;font-size:13px;color:#111">D</div>
<div class="a" style="left:553px;top:203px;width:1px;height:19px;background:#b8b8b8"></div>
<div class="t" style="left:423px;top:207px;width:131px;text-align:center;font-size:13px;color:#111">E</div>
<div class="a" style="left:665px;top:203px;width:1px;height:19px;background:#b8b8b8"></div>
<div class="t" style="left:554px;top:207px;width:112px;text-align:center;font-size:13px;color:#111">F</div>
<div class="a" style="left:781px;top:203px;width:1px;height:19px;background:#b8b8b8"></div>
<div class="t" style="left:666px;top:207px;width:116px;text-align:center;font-size:13px;color:#111">G</div>
<div class="a" style="left:800px;top:203px;width:1px;height:19px;background:#b8b8b8"></div>
<div class="t" style="left:782px;top:207px;width:19px;text-align:center;font-size:13px;color:#111">H</div>
<div class="a" style="left:864px;top:203px;width:1px;height:19px;background:#b8b8b8"></div>
<div class="t" style="left:801px;top:207px;width:64px;text-align:center;font-size:13px;color:#111">I</div>
<div class="a" style="left:928px;top:203px;width:1px;height:19px;background:#b8b8b8"></div>
<div class="t" style="left:865px;top:207px;width:64px;text-align:center;font-size:13px;color:#111">J</div>
<div class="a" style="left:992px;top:203px;width:1px;height:19px;background:#b8b8b8"></div>
<div class="t" style="left:929px;top:207px;width:64px;text-align:center;font-size:13px;color:#111">K</div>
<div class="a" style="left:1056px;top:203px;width:1px;height:19px;background:#b8b8b8"></div>
<div class="t" style="left:993px;top:207px;width:64px;text-align:center;font-size:13px;color:#111">L</div>
<div class="a" style="left:1120px;top:203px;width:1px;height:19px;background:#b8b8b8"></div>
<div class="t" style="left:1057px;top:207px;width:64px;text-align:center;font-size:13px;color:#111">M</div>
<div class="a" style="left:1184px;top:203px;width:1px;height:19px;background:#b8b8b8"></div>
<div class="t" style="left:1121px;top:207px;width:64px;text-align:center;font-size:13px;color:#111">N</div>
<div class="a" style="left:1248px;top:203px;width:1px;height:19px;background:#b8b8b8"></div>
<div class="t" style="left:1185px;top:207px;width:64px;text-align:center;font-size:13px;color:#111">O</div>
<div class="a" style="left:1312px;top:203px;width:1px;height:19px;background:#b8b8b8"></div>
<div class="t" style="left:1249px;top:207px;width:64px;text-align:center;font-size:13px;color:#111">P</div>
<div class="a" style="left:0px;top:267px;width:22px;height:1px;background:#b8b8b8"></div>
<div class="t" style="left:-1px;top:251px;width:22px;text-align:center;font-size:13px;color:#111">1</div>
<div class="a" style="left:0px;top:290px;width:22px;height:1px;background:#b8b8b8"></div>
<div class="t" style="left:-1px;top:274px;width:22px;text-align:center;font-size:13px;color:#111">2</div>
<div class="a" style="left:0px;top:314px;width:22px;height:1px;background:#b8b8b8"></div>
<div class="t" style="left:-1px;top:298px;width:22px;text-align:center;font-size:13px;color:#111">3</div>
<div class="a" style="left:0px;top:360px;width:22px;height:1px;background:#b8b8b8"></div>
<div class="t" style="left:-1px;top:344px;width:22px;text-align:center;font-size:13px;color:#111">4</div>
<div class="a" style="left:0px;top:417px;width:22px;height:1px;background:#b8b8b8"></div>
<div class="t" style="left:-1px;top:401px;width:22px;text-align:center;font-size:13px;color:#111">5</div>
<div class="a" style="left:0px;top:457px;width:22px;height:1px;background:#b8b8b8"></div>
<div class="t" style="left:-1px;top:441px;width:22px;text-align:center;font-size:13px;color:#111">6</div>
<div class="a" style="left:0px;top:506px;width:22px;height:1px;background:#b8b8b8"></div>
<div class="t" style="left:-1px;top:490px;width:22px;text-align:center;font-size:13px;color:#111">7</div>
<div class="a" style="left:0px;top:533px;width:22px;height:1px;background:#b8b8b8"></div>
<div class="t" style="left:-1px;top:517px;width:22px;text-align:center;font-size:13px;color:#111">8</div>
<div class="a" style="left:0px;top:560px;width:22px;height:1px;background:#b8b8b8"></div>
<div class="t" style="left:-1px;top:544px;width:22px;text-align:center;font-size:13px;color:#111">9</div>
<div class="a" style="left:0px;top:587px;width:22px;height:1px;background:#b8b8b8"></div>
<div class="t" style="left:-1px;top:571px;width:22px;text-align:center;font-size:13px;color:#111">10</div>
<div class="a" style="left:0px;top:614px;width:22px;height:1px;background:#b8b8b8"></div>
<div class="t" style="left:-1px;top:598px;width:22px;text-align:center;font-size:13px;color:#111">11</div>
<div class="a" style="left:0px;top:641px;width:22px;height:1px;background:#b8b8b8"></div>
<div class="t" style="left:-1px;top:625px;width:22px;text-align:center;font-size:13px;color:#111">12</div>
<div class="a" style="left:0px;top:668px;width:22px;height:1px;background:#b8b8b8"></div>
<div class="t" style="left:-1px;top:652px;width:22px;text-align:center;font-size:13px;color:#111">13</div>
<div class="a" style="left:0px;top:695px;width:22px;height:1px;background:#b8b8b8"></div>
<div class="t" style="left:-1px;top:679px;width:22px;text-align:center;font-size:13px;color:#111">14</div>
<div class="a" style="left:0px;top:722px;width:22px;height:1px;background:#b8b8b8"></div>
<div class="t" style="left:-1px;top:706px;width:22px;text-align:center;font-size:13px;color:#111">15</div>
<div class="a" style="left:0px;top:749px;width:22px;height:1px;background:#b8b8b8"></div>
<div class="t" style="left:-1px;top:733px;width:22px;text-align:center;font-size:13px;color:#111">16</div>
<div class="a" style="left:0px;top:776px;width:22px;height:1px;background:#b8b8b8"></div>
<div class="t" style="left:-1px;top:760px;width:22px;text-align:center;font-size:13px;color:#111">17</div>
<div class="a" style="left:0px;top:803px;width:22px;height:1px;background:#b8b8b8"></div>
<div class="t" style="left:-1px;top:787px;width:22px;text-align:center;font-size:13px;color:#111">18</div>
<div class="a" style="left:0px;top:830px;width:22px;height:1px;background:#b8b8b8"></div>
<div class="t" style="left:-1px;top:814px;width:22px;text-align:center;font-size:13px;color:#111">19</div>
<div class="a" style="left:0px;top:857px;width:22px;height:1px;background:#b8b8b8"></div>
<div class="t" style="left:-1px;top:841px;width:22px;text-align:center;font-size:13px;color:#111">20</div>
<div class="a" style="left:0px;top:884px;width:22px;height:1px;background:#b8b8b8"></div>
<div class="t" style="left:-1px;top:868px;width:22px;text-align:center;font-size:13px;color:#111">21</div>
<div class="a" style="left:23px;top:223px;width:778px;height:1px;background:#2e3b48"></div>
<div class="a" style="left:23px;top:224px;width:778px;height:44px;background:#c38b8a"></div>
<div class="t" style="left:47px;top:231px;font-size:32px;color:#2e3b48;">考勤记录</div>
<div class="t" style="left:45px;top:272px;font-size:16px;color:#2e3b48;letter-spacing:0.1px">员工姓名 | 电子邮件 | 电话</div>
<div class="t" style="left:45px;top:296px;font-size:16px;color:#2e3b48;letter-spacing:0.1px">经理 | 经理姓名</div>
<div class="t" style="left:45px;top:335px;font-size:21px;color:#98504a;letter-spacing:0.2px">时间段开始日期 - 结束日期</div>
<div class="t" style="left:45px;top:400px;font-size:16px;color:#2e3b48;">每周工作总时数</div>
<div class="t" style="left:179px;top:400px;font-size:16px;color:#2e3b48;">总工作时数</div>
<div class="t" style="left:291px;top:400px;font-size:16px;color:#2e3b48;">正常工作时数</div>
<div class="t" style="left:426px;top:400px;font-size:16px;color:#2e3b48;">加班小时数</div>
<div class="t" style="left:46px;top:424px;font-size:31px;color:#2e3b48;transform:scaleX(0.91);transform-origin:0 0">40.00</div>
<div class="t" style="left:180px;top:424px;font-size:31px;color:#2e3b48;transform:scaleX(0.91);transform-origin:0 0">0.00</div>
<div class="t" style="left:292px;top:424px;font-size:31px;color:#2e3b48;transform:scaleX(0.91);transform-origin:0 0">0.00</div>
<div class="t" style="left:427px;top:424px;font-size:31px;color:#2e3b48;transform:scaleX(0.91);transform-origin:0 0">0.00</div>
<div class="a" style="left:41px;top:457px;width:741px;height:1px;background:#2e3b48"></div>
<div class="t" style="left:45px;top:488px;font-size:15px;color:#98504a;">日期</div>
<div class="a" style="left:158px;top:488px;width:17px;height:17px;background:#f4f7f8;border:1px solid #a9b0b6"></div>
<svg style="left:163px;top:495px" width="8" height="5"><path d="M0 0H7L3.5 4Z" fill="#555"/></svg>
<div class="t" style="left:179px;top:488px;font-size:15px;color:#98504a;">上班时间</div>
<div class="a" style="left:270px;top:488px;width:17px;height:17px;background:#f4f7f8;border:1px solid #a9b0b6"></div>
<svg style="left:275px;top:495px" width="8" height="5"><path d="M0 0H7L3.5 4Z" fill="#555"/></svg>
<div class="t" style="left:291px;top:488px;font-size:15px;color:#98504a;">午餐开始时间</div>
<div class="a" style="left:405px;top:488px;width:17px;height:17px;background:#f4f7f8;border:1px solid #a9b0b6"></div>
<svg style="left:410px;top:495px" width="8" height="5"><path d="M0 0H7L3.5 4Z" fill="#555"/></svg>
<div class="t" style="left:426px;top:488px;font-size:15px;color:#98504a;">午餐结束时间</div>
<div class="a" style="left:536px;top:488px;width:17px;height:17px;background:#f4f7f8;border:1px solid #a9b0b6"></div>
<svg style="left:541px;top:495px" width="8" height="5"><path d="M0 0H7L3.5 4Z" fill="#555"/></svg>
<div class="t" style="left:557px;top:488px;font-size:15px;color:#98504a;">下班时间</div>
<div class="a" style="left:648px;top:488px;width:17px;height:17px;background:#f4f7f8;border:1px solid #a9b0b6"></div>
<svg style="left:653px;top:495px" width="8" height="5"><path d="M0 0H7L3.5 4Z" fill="#555"/></svg>
<div class="t" style="left:669px;top:488px;font-size:15px;color:#98504a;">工作时数</div>
<div class="a" style="left:765px;top:488px;width:17px;height:17px;background:#f4f7f8;border:1px solid #a9b0b6"></div>
<svg style="left:770px;top:495px" width="8" height="5"><path d="M0 0H7L3.5 4Z" fill="#555"/></svg>
<div class="a" style="left:41px;top:505px;width:741px;height:2px;background:#8f544f"></div>
<div class="t" style="left:45px;top:515px;font-size:15px;color:#2e3b48;">日期</div>
<div class="t" style="left:179px;top:515px;font-size:15px;color:#2e3b48;">上班时间</div>
<div class="t" style="left:291px;top:515px;font-size:15px;color:#2e3b48;">午餐开始时间</div>
<div class="t" style="left:426px;top:515px;font-size:15px;color:#2e3b48;">午餐结束时间</div>
<div class="t" style="left:557px;top:515px;font-size:15px;color:#2e3b48;">下班时间</div>
<div class="t" style="left:669px;top:516px;font-size:16px;color:#2e3b48;transform:scaleX(0.96);transform-origin:0 0">0.00</div>
<div class="a" style="left:41px;top:533px;width:741px;height:1px;background:#d5b3b3"></div>
<div class="t" style="left:45px;top:542px;font-size:15px;color:#2e3b48;">日期</div>
<div class="t" style="left:179px;top:542px;font-size:15px;color:#2e3b48;">上班时间</div>
<div class="t" style="left:291px;top:542px;font-size:15px;color:#2e3b48;">午餐开始时间</div>
<div class="t" style="left:426px;top:542px;font-size:15px;color:#2e3b48;">午餐结束时间</div>
<div class="t" style="left:557px;top:542px;font-size:15px;color:#2e3b48;">下班时间</div>
<div class="t" style="left:669px;top:543px;font-size:16px;color:#2e3b48;transform:scaleX(0.96);transform-origin:0 0">0.00</div>
<div class="a" style="left:41px;top:560px;width:741px;height:1px;background:#d5b3b3"></div>
<div class="t" style="left:45px;top:569px;font-size:15px;color:#2e3b48;">日期</div>
<div class="t" style="left:179px;top:569px;font-size:15px;color:#2e3b48;">上班时间</div>
<div class="t" style="left:291px;top:569px;font-size:15px;color:#2e3b48;">午餐开始时间</div>
<div class="t" style="left:426px;top:569px;font-size:15px;color:#2e3b48;">午餐结束时间</div>
<div class="t" style="left:557px;top:569px;font-size:15px;color:#2e3b48;">下班时间</div>
<div class="t" style="left:669px;top:570px;font-size:16px;color:#2e3b48;transform:scaleX(0.96);transform-origin:0 0">0.00</div>
<div class="a" style="left:41px;top:587px;width:741px;height:1px;background:#d5b3b3"></div>
<div class="t" style="left:45px;top:596px;font-size:15px;color:#2e3b48;">日期</div>
<div class="t" style="left:179px;top:596px;font-size:15px;color:#2e3b48;">上班时间</div>
<div class="t" style="left:291px;top:596px;font-size:15px;color:#2e3b48;">午餐开始时间</div>
<div class="t" style="left:426px;top:596px;font-size:15px;color:#2e3b48;">午餐结束时间</div>
<div class="t" style="left:557px;top:596px;font-size:15px;color:#2e3b48;">下班时间</div>
<div class="t" style="left:669px;top:597px;font-size:16px;color:#2e3b48;transform:scaleX(0.96);transform-origin:0 0">0.00</div>
<div class="a" style="left:41px;top:614px;width:741px;height:1px;background:#d5b3b3"></div>
<div class="t" style="left:45px;top:623px;font-size:15px;color:#2e3b48;">日期</div>
<div class="t" style="left:179px;top:623px;font-size:15px;color:#2e3b48;">上班时间</div>
<div class="t" style="left:291px;top:623px;font-size:15px;color:#2e3b48;">午餐开始时间</div>
<div class="t" style="left:426px;top:623px;font-size:15px;color:#2e3b48;">午餐结束时间</div>
<div class="t" style="left:557px;top:623px;font-size:15px;color:#2e3b48;">下班时间</div>
<div class="t" style="left:669px;top:624px;font-size:16px;color:#2e3b48;transform:scaleX(0.96);transform-origin:0 0">0.00</div>
<svg style="left:776px;top:636px" width="5" height="5" viewBox="0 0 5 5"><path d="M4 0V4H0V3H3V0Z" fill="#3a5fa8"/></svg>
</body></html>
